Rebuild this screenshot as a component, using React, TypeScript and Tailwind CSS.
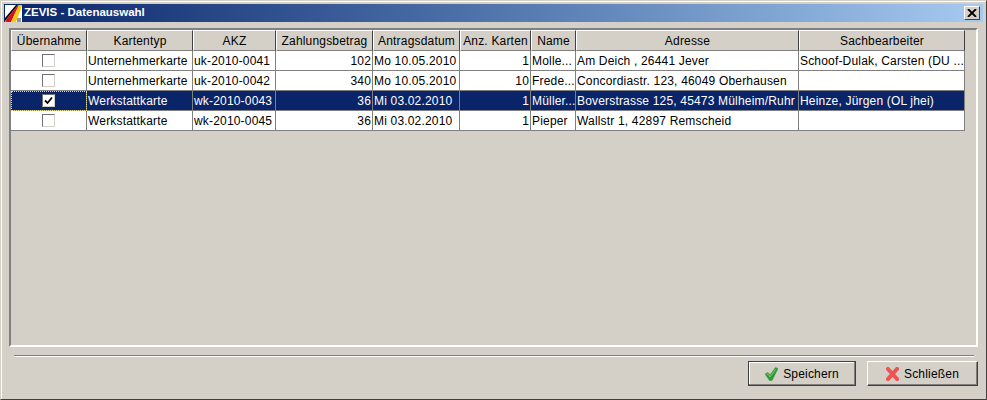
const columns = [
  { title: "Übernahme", width: "w-[76px]" },
  { title: "Kartentyp", width: "w-[106px]" },
  { title: "AKZ", width: "w-[83px]" },
  { title: "Zahlungsbetrag", width: "w-[97px]" },
  { title: "Antragsdatum", width: "w-[87px]" },
  { title: "Anz. Karten", width: "w-[71px]" },
  { title: "Name", width: "w-[45px]" },
  { title: "Adresse", width: "w-[223px]" },
  { title: "Sachbearbeiter", width: "w-[166px]" },
];

const rows = [
  { checked: false, selected: false, cells: ["Unternehmerkarte", "uk-2010-0041", "102", "Mo 10.05.2010", "1", "Molle...", "Am Deich , 26441 Jever", "Schoof-Dulak, Carsten (DU ..."] },
  { checked: false, selected: false, cells: ["Unternehmerkarte", "uk-2010-0042", "340", "Mo 10.05.2010", "10", "Frede...", "Concordiastr. 123, 46049 Oberhausen", ""] },
  { checked: true, selected: true, cells: ["Werkstattkarte", "wk-2010-0043", "36", "Mi 03.02.2010", "1", "Müller...", "Boverstrasse 125, 45473 Mülheim/Ruhr", "Heinze, Jürgen (OL jhei)"] },
  { checked: false, selected: false, cells: ["Werkstattkarte", "wk-2010-0045", "36", "Mi 03.02.2010", "1", "Pieper", "Wallstr 1, 42897 Remscheid", ""] },
];

function Logo() {
  return (
    <svg width="17" height="17" viewBox="0 0 17 17" className="shrink-0">
      <rect width="17" height="17" fill="#ffffff" />
      <polygon points="0,16 0,13 11,0 13,0" fill="#000000" />
      <polygon points="1,17 0,16 13,0 14,0 6,17" fill="#d8101c" />
      <polygon points="6,17 14,0 17,0 17,1 11,17" fill="#f6c810" />
      <rect x="12" y="13" width="4" height="4" fill="#8a9aa8" />
    </svg>
  );
}

function CheckIcon() {
  return (
    <svg width="13" height="14" viewBox="0 0 13 14" className="shrink-0">
      <path d="M0 7 L3 5.5 L5 8 L10.5 0.5 L13 1.5 L7 13.5 L4.5 13.5 Z" fill="#2f9a35" stroke="#3b8a3a" strokeWidth="0.5" />
      <path d="M1.5 7 L3.5 7.5 L5 10 L10.5 2.5" fill="none" stroke="#79cf6c" strokeWidth="1" />
    </svg>
  );
}

function CrossIcon() {
  return (
    <svg width="13" height="14" viewBox="0 0 13 14" className="shrink-0">
      <path d="M2 2 L11 12 M11 2 L2 12" fill="none" stroke="#ee5252" strokeWidth="4" strokeLinecap="square" />
    </svg>
  );
}

function CheckBox({ checked }: { checked: boolean }) {
  return (
    <div className="flex h-[13px] w-[13px] items-center justify-center border border-t-[#707070] border-l-[#707070] border-r-[#d4d0c8] border-b-[#d4d0c8] bg-white">
      {checked && (
        <svg width="9" height="9" viewBox="0 0 9 9">
          <path d="M1 4.5 L3.5 7 L8 1.5" fill="none" stroke="#000000" strokeWidth="1.8" />
        </svg>
      )}
    </div>
  );
}

export default function App() {
  return (
    <div className="flex h-[400px] w-[987px] flex-col border-t border-r border-b border-l border-t-[#d4d0c8] border-l-[#d4d0c8] border-r-[#404040] border-b-[#404040] bg-[#d4d0c8] font-['Liberation_Sans',Arial,sans-serif] text-[12px] tracking-[0.18px] text-black">
      <div className="flex h-full flex-col border-t border-l border-t-white border-l-white pt-[2px] pr-[3px] pl-[2px]">
        {/* Title bar */}
        <div className="flex h-[18px] shrink-0 items-center bg-gradient-to-r from-[#0a246a] to-[#a6caf0] pr-[3px] pl-px">
          <Logo />
          <span className="ml-[2px] text-[11.5px] font-bold tracking-normal text-white">ZEVIS - Datenauswahl</span>
          <button className="ml-auto flex h-[14px] w-[16px] items-center justify-center border border-t-white border-l-white border-r-[#404040] border-b-[#404040] bg-[#d4d0c8]">
            <svg width="10" height="8" viewBox="0 0 10 8">
              <path d="M1 0 L9 8 M9 0 L1 8" stroke="#000000" strokeWidth="1.8" />
            </svg>
          </button>
        </div>

        {/* Table panel */}
        <div className="mt-[6px] ml-[5px] h-[319px] w-[969px] shrink-0 border-2 border-t-[#808080] border-l-[#808080] border-r-white border-b-white">
          <div className="flex h-[21px] w-fit">
            {columns.map((col) => (
              <div
                key={col.title}
                className={`${col.width} flex shrink-0 items-center justify-center border border-t-white border-l-white border-r-[#404040] border-b-[#808080] bg-[#d4d0c8]`}
              >
                <span className="whitespace-nowrap">{col.title}</span>
              </div>
            ))}
          </div>
          {rows.map((row) => (
            <div key={row.cells[1]} className={`flex h-[20px] w-fit ${row.selected ? "bg-[#0a246a] text-white" : "bg-white"}`}>
              <div className={`${columns[0].width} flex shrink-0 items-center justify-center border-r border-b border-[#808080] ${row.selected ? "outline-1 -outline-offset-1 outline-dotted outline-[#e8d890]" : ""}`}>
                <CheckBox checked={row.checked} />
              </div>
              {row.cells.map((cell, i) => (
                <div
                  key={columns[i + 1].title}
                  className={`${columns[i + 1].width} flex shrink-0 items-center overflow-hidden whitespace-nowrap border-r border-b border-[#808080] px-px ${i === 2 || i === 4 ? "justify-end" : ""}`}
                >
                  {cell}
                </div>
              ))}
            </div>
          ))}
        </div>

        {/* Footer */}
        <div className="mt-[8px] ml-[10px] h-[2px] w-[960px] shrink-0 border-t border-b border-t-[#808080] border-b-white" />
        <div className="mt-[4px] mr-[5px] flex shrink-0 justify-end gap-[11px]">
          <button className="flex h-[25px] w-[108px] items-center justify-center gap-[5px] border border-[#404040] bg-[#d4d0c8] shadow-[inset_-1px_-1px_0_#808080,inset_1px_1px_0_#ffffff]">
            <CheckIcon />
            Speichern
          </button>
          <button className="flex h-[25px] w-[111px] items-center justify-center gap-[5px] border border-t-white border-l-white border-r-[#404040] border-b-[#404040] bg-[#d4d0c8] shadow-[inset_-1px_-1px_0_#808080]">
            <CrossIcon />
            Schließen
          </button>
        </div>
      </div>
    </div>
  );
}
